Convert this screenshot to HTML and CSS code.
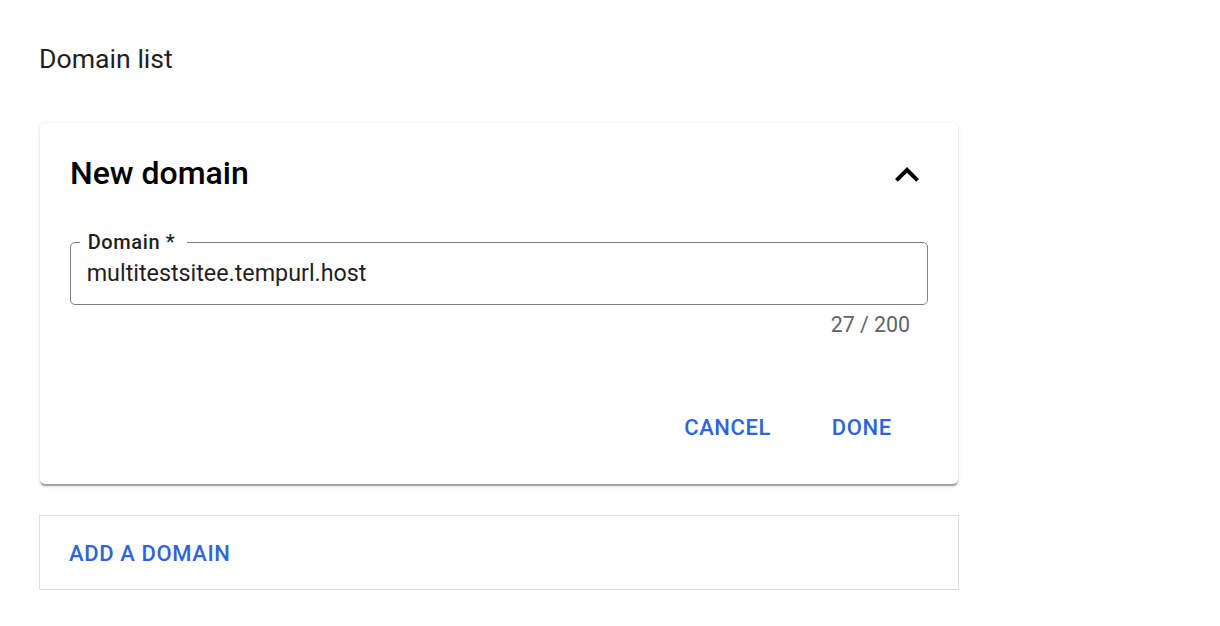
FILE: index.html
```html
<!DOCTYPE html>
<html lang="en">
<head>
<meta charset="utf-8">
<title>Domain list</title>
<link rel="stylesheet" href="styles.css">
</head>
<body>
<main class="page">
  <h1 class="page-title">Domain list</h1>
  <section class="card">
    <header class="card-header">
      <h2 class="card-title">New domain</h2>
      <button class="icon-btn" aria-label="Collapse">
        <svg class="chevron" width="48" height="48" viewBox="0 0 48 48"><path d="M24 16L12 28l2.82 2.82L24 21.66l9.18 9.16L36 28z" fill="#000"/></svg>
      </button>
    </header>
    <div class="field">
      <span class="field-label">Domain *</span>
      <div class="field-value">multitestsitee.tempurl.host</div>
    </div>
    <div class="counter">27 / 200</div>
    <div class="actions">
      <button class="text-btn">CANCEL</button>
      <button class="text-btn">DONE</button>
    </div>
  </section>
  <div class="add-box">
    <button class="text-btn add-btn">ADD A DOMAIN</button>
  </div>
</main>
</body>
</html>
```
FILE: styles.css
```css
* { box-sizing: border-box; }
html, body { margin: 0; background: #fff; }
body { font-family: Roboto, "Noto Sans", Arial, sans-serif; color: #1b1b1b; }

.page { padding: 39px 0 0 39px; width: 959px; }

.page-title {
  margin: 0;
  font-size: 26.67px;
  line-height: 41px;
  font-weight: 400;
  color: #1f1f1f;
}

.card {
  margin: 43px 1px 0;
  padding: 26px 30px 32.5px;
  background: #fff;
  border-radius: 5px;
  box-shadow: 0 2.67px 1.33px -1.33px rgba(0,0,0,.22), 0 1.33px 1.33px 0 rgba(0,0,0,.14), 0 1.33px 4px 0 rgba(0,0,0,.12);
}

.card-header {
  display: flex;
  justify-content: space-between;
  align-items: flex-start;
}

.card-title {
  margin: 0;
  font-size: 32px;
  line-height: 48px;
  font-weight: 500;
  color: #000;
}

.icon-btn {
  border: 0;
  background: none;
  padding: 0;
  margin: 2px -3px 0 0;
  width: 48px;
  height: 48px;
  display: block;
}
.chevron { display: block; }

.field {
  position: relative;
  margin-top: 43px;
  height: 63px;
  border: 1.3px solid #7d8086;
  border-radius: 5px;
  padding: 15.5px 0 0 15.7px;
}

.field-label {
  position: absolute;
  top: -11.4px;
  left: 8.7px;
  padding: 0 12px 0 8px;
  background: #fff;
  font-size: 20px;
  line-height: 20px;
  font-weight: 500;
  letter-spacing: 0.6px;
  color: #1f1f1f;
}

.field-value {
  font-size: 23.3px;
  line-height: 28px;
  color: #1f1f1f;
}

.counter {
  margin-top: 7.7px;
  padding-right: 18px;
  text-align: right;
  font-size: 21.33px;
  line-height: 24px;
  color: #5f6368;
}

.actions {
  display: flex;
  justify-content: flex-end;
  gap: 18px;
  margin-top: 67px;
  padding-right: 15px;
}

.text-btn {
  border: 0;
  background: none;
  font-family: Roboto, "Noto Sans", Arial, sans-serif;
  font-size: 22px;
  line-height: 48px;
  height: 48px;
  font-weight: 500;
  letter-spacing: 0.6px;
  color: #2f65d6;
  padding: 0 21.33px;
}

.add-box {
  margin-top: 31px;
  height: 74.5px;
  border: 1.5px solid #dedede;
  padding: 14px 0 0 29px;
}

.add-btn { padding: 0; display: block; }
```
